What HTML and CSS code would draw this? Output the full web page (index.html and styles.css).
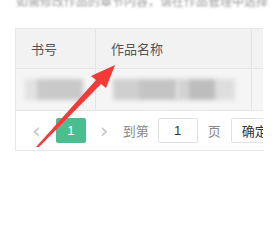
FILE: index.html
```html
<!DOCTYPE html>
<html lang="zh-CN">
<head>
    <meta charset="UTF-8">
    <title>作品列表</title>
    <link rel="stylesheet" href="styles.css">
</head>
<body>
    <div class="page">
        <p class="tip">如需修改作品的章节内容，请在作品管理中选择</p>

        <div class="card">
            <div class="row head">
                <div class="cell c1">书号</div>
                <div class="cell c2">作品名称</div>
                <div class="cell c3"></div>
            </div>
            <div class="row data">
                <div class="cell c1"><span class="smear s1"></span></div>
                <div class="cell c2"><span class="smear s2"></span><span class="smear s3"></span></div>
                <div class="cell c3"></div>
            </div>
            <div class="pager">
                <span class="arrow">&lsaquo;</span>
                <span class="page-num">1</span>
                <span class="arrow">&rsaquo;</span>
                <span class="label">到第</span>
                <span class="jump">1</span>
                <span class="label">页</span>
                <span class="ok">确定</span>
            </div>
        </div>

        <svg class="pointer" width="274" height="252" viewBox="0 0 274 252">
            <polygon points="36,147 96,80 91,76 115,65 106,88 101,84 39,147" fill="#f23b37"/>
        </svg>
    </div>
</body>
</html>
```

FILE: styles.css
```css
body {
    margin: 0;
    background: #fff;
    font-family: "Noto Sans CJK SC", "Noto Sans", sans-serif;
}
.page {
    position: relative;
    width: 274px;
    height: 252px;
    overflow: hidden;
}
.tip {
    margin: -6px 0 0 16px;
    height: 34px;
    font-size: 12px;
    line-height: 14px;
    color: #9a9a9a;
    white-space: nowrap;
    filter: blur(1px);
}
.card {
    margin-left: 15px;
    width: 247px;
    border-left: 1px solid #e8e8e8;
    overflow: hidden;
}
.row {
    display: flex;
    border-top: 1px solid #e6e6e6;
}
.head { height: 39px; background: #f2f2f2; }
.data { height: 41px; background: #f5f5f5; }
.cell {
    display: flex;
    align-items: center;
    flex-shrink: 0;
    font-size: 13px;
    color: #555;
    border-right: 1px solid #e4e4e4;
}
.c1 { width: 80px; padding-left: 15px; box-sizing: border-box; }
.c2 { width: 156px; padding-left: 15px; box-sizing: border-box; }
.c3 { flex: 1; border-right: none; }
.smear {
    display: block;
    height: 21px;
    filter: blur(2px);
}
.s1 { width: 58px; margin-left: -6px; background: linear-gradient(90deg, #e2e2e2 0 20%, #c9c9c9 20% 100%); }
.s2 { width: 64px; margin-left: 2px; background: linear-gradient(90deg, #cfcfcf 0 40%, #c4c4c4 40% 100%); }
.s3 { width: 58px; background: linear-gradient(90deg, #d3d3d3 0 20%, #bdbdbd 20% 65%, #dedede 65% 100%); }
.pager {
    display: flex;
    align-items: center;
    height: 39px;
    border-top: 1px solid #e6e6e6;
    border-bottom: 1px solid #e6e6e6;
    background: #fff;
    font-size: 13px;
    color: #666;
    white-space: nowrap;
}
.pager > span { flex-shrink: 0; }
.arrow {
    font-family: "DejaVu Sans", sans-serif;
    font-size: 22px;
    color: #c6c6c6;
    line-height: 25px;
}
.arrow:first-child { margin-left: 16px; }
.page-num {
    width: 30px;
    height: 25px;
    margin: 0 14px 0 15px;
    background: #4cbd8f;
    color: #fff;
    border-radius: 2px;
    text-align: center;
    line-height: 25px;
    font-family: "Liberation Sans", sans-serif;
    font-size: 13px;
}
.label { margin-left: 14px; color: #888; }
.jump {
    width: 38px;
    height: 23px;
    margin-left: 9px;
    border: 1px solid #e2e2e2;
    border-radius: 2px;
    text-align: center;
    line-height: 23px;
    font-family: "Liberation Sans", sans-serif;
    color: #333;
}
.jump + .label { margin-left: 10px; }
.ok {
    margin-left: 10px;
    height: 23px;
    padding: 0 14px 0 10px;
    border: 1px solid #e2e2e2;
    border-radius: 2px;
    line-height: 23px;
    color: #333;
}
.pointer {
    position: absolute;
    left: 0;
    top: 0;
}
```
